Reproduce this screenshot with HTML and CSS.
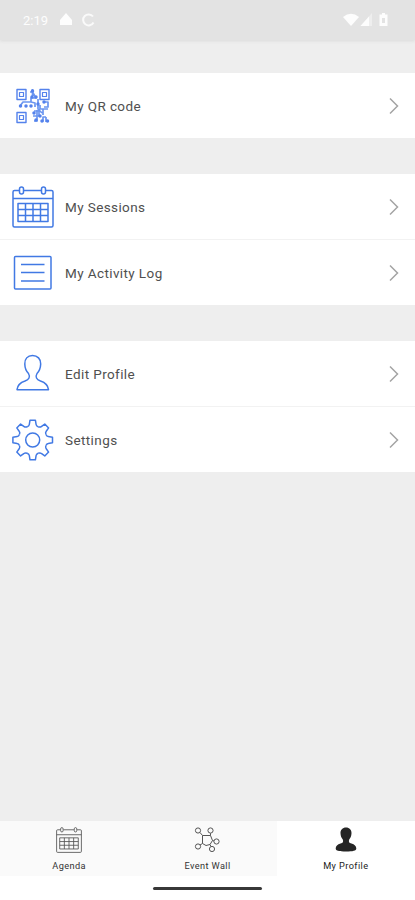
FILE: index.html
```html
<!DOCTYPE html>
<html lang="en">
<head>
<meta charset="utf-8">
<title>My Profile</title>
<link rel="stylesheet" href="styles.css">
</head>
<body>
<svg width="0" height="0" class="defs">
  <symbol id="chevron" viewBox="0 0 12 20"><path d="M2 2.500 9.500 10 2 17.500" /></symbol>
  <symbol id="calendar" viewBox="0 0 42 42">
    <path d="M7 4.500H2.500Q1 4.500 1 6V39.500Q1 41 2.500 41H39.500Q41 41 41 39.500V6Q41 4.500 39.500 4.500H34M12 4.500H29M1 12.500H41"/>
    <rect x="7.500" y="1" width="4" height="7" rx="2"/><rect x="29.500" y="1" width="4" height="7" rx="2"/>
    <path d="M6 17.500H36V35.500H6ZM6 23.500H36M6 29.500H36M13.500 17.500V35.500M21 17.500V35.500M28.500 17.500V35.500"/>
  </symbol>
</svg>
<div class="screen">
  <header class="status">
    <span class="time">2:19</span>
    <svg class="status-left" width="38" height="16" viewBox="0 0 38 16">
      <path class="solid" d="M7 1 13 8V13H1V8Z"/>
      <path class="ring" d="M34 4.500A5.500 5.500 0 1 0 34.500 10.500"/>
    </svg>
    <svg class="status-right" width="46" height="16" viewBox="0 0 46 16">
      <path class="solid" d="M0 5Q8-1.500 16 5L8 14Z"/>
      <path class="faint" d="M17.500 14 29 1V14Z"/><path class="solid" d="M17.500 14 26 4.500V14Z"/>
      <path class="solid" fill-rule="evenodd" d="M37 2.500H39V1H42V2.500H44.500V14H36.500V2.500ZM39 6V11H42V6Z"/>
    </svg>
  </header>
  <main class="menu">
    <section class="group">
      <a class="row">
        <svg class="icon qr" width="42" height="42" viewBox="0 0 42 42">
          <path d="M5 4.500H14V14.500H5ZM28 4.500H37V14.500H28ZM5 27.500H14V37.500H5Z"/>
          <path class="inner" d="M7.500 7.500H11.500V11.500H7.500ZM30.500 7.500H34.500V11.500H30.500ZM7.500 30.500H11.500V34.500H7.500Z"/>
          <path class="bits" d="M20.500 4V11M18 7H20.500L24 13H19V17M8 21 11 17H19L23 18V22M26 14V24L30 28M31 17H36V22H32M28 20V24H31M36 24H31V30M22 26H27V31H21M25 25V34M22 36H25V33M29 36H31V32H34M34 32V37"/>
          <path class="dots" d="M20.500 6V6.010M20 12V12.010M24 12V12.010M8.500 21V21.010M14 21V21.010M19 21V21.010M26 19V19.010M32 17V17.010M22 28V28.010M28 31V31.010M24 35V35.010M30 36V36.010M35.500 36V36.010"/>
        </svg>
        <span class="label">My QR code</span><svg class="chevron"><use href="#chevron"/></svg>
      </a>
    </section>
    <section class="group">
      <a class="row">
        <svg class="icon" width="42" height="42"><use href="#calendar"/></svg>
        <span class="label">My Sessions</span><svg class="chevron"><use href="#chevron"/></svg>
      </a>
      <a class="row">
        <svg class="icon" width="42" height="42" viewBox="0 0 42 42"><rect x="2.500" y="4.500" width="36.500" height="32.500" rx="1"/><path d="M9 12.500H32.500M9 20.500H32.500M9 29H32.500"/></svg>
        <span class="label">My Activity Log</span><svg class="chevron"><use href="#chevron"/></svg>
      </a>
    </section>
    <section class="group">
      <a class="row">
        <svg class="icon" width="42" height="42" viewBox="0 1 42 42"><path d="M20.500 3.500C15.500 3.500 12.500 7 12.800 12C12.900 16.500 14 19 16.500 21.500C18.500 25 17 27.500 13 29C7.500 30.800 5.500 33 5 37.700H36.500C36 33 34 30.800 28.500 29C24.500 27.500 23 25 25 21.500C27.500 19 28.500 16.500 28.700 12C28.900 7 25.500 3.500 20.500 3.500Z"/></svg>
        <span class="label">Edit Profile</span><svg class="chevron"><use href="#chevron"/></svg>
      </a>
      <a class="row">
        <svg class="icon" width="42" height="42" viewBox="-20.700 -21 42 42">
          <g id="tooth"><path d="M-5.510-13.300Q-3.600-14-3.400-15.500L-2.700-19.800H2.700L3.400-15.500Q3.600-14 5.510-13.300"/></g>
          <use href="#tooth" transform="rotate(45)"/><use href="#tooth" transform="rotate(90)"/><use href="#tooth" transform="rotate(135)"/><use href="#tooth" transform="rotate(180)"/><use href="#tooth" transform="rotate(225)"/><use href="#tooth" transform="rotate(270)"/><use href="#tooth" transform="rotate(315)"/>
          <circle r="7"/>
        </svg>
        <span class="label">Settings</span><svg class="chevron"><use href="#chevron"/></svg>
      </a>
    </section>
  </main>
  <nav class="tabs">
    <a class="tab"><svg class="tab-icon" width="26" height="26" viewBox="0 0 42 42"><use href="#calendar"/></svg><span>Agenda</span></a>
    <a class="tab"><svg class="tab-icon net" width="26" height="26" viewBox="0 0 26 26"><path d="M8.500 8.500H16.500L18.500 13.500 16 17.500 12 18.500 8.500 16.500Z"/><circle cx="4" cy="3.500" r="2.600"/><circle cx="16.500" cy="3.500" r="2.600"/><circle cx="22.500" cy="14.500" r="2.600"/><circle cx="4" cy="19.500" r="2.600"/><circle cx="18" cy="22" r="2.600"/><path d="M6 5.500 8.500 8.500M16.500 6.200V8.500M18.500 13.500 20 14M6 18 8.500 16.500M16 17.500 17 19.500"/></svg><span>Event Wall</span></a>
    <a class="tab active"><svg class="tab-icon person" width="26" height="26" viewBox="0 0 26 26"><path d="M13 .5C9.500 .5 7.300 3 7.500 6.200C7.600 9.200 8.600 11 9.800 12.500C10.600 15 10 15.700 7.500 16.500C4.500 17.500 2.700 19 2.700 21.500C2.700 23.700 6 24.500 13 24.500S23.300 23.700 23.300 21.500C23.300 19 21.500 17.500 18.500 16.500C16 15.700 15.400 15 16.200 12.500C17.400 11 18.400 9.200 18.500 6.200C18.700 3 16.500 .5 13 .5Z"/></svg><span>My Profile</span></a>
  </nav>
  <footer class="home"><div class="home-bar"></div></footer>
</div>
</body>
</html>
```
FILE: styles.css
```css
* { box-sizing: border-box; }
body { margin: 0; font-family: Roboto, sans-serif; background: #eee; }
.defs { display: block; height: 0; }
.screen { display: flex; flex-direction: column; height: 900px; width: 415px; background: #eee; }
.status { height: 40px; flex: none; display: flex; align-items: center; padding: 0 26px 0 23px; background: #e3e3e3; box-shadow: 0 1px 3px #dadada; color: #fdfdfd; }
.time { width: 36px; font-size: 13px; letter-spacing: 0; }
.status-right { margin-left: auto; }
.solid { fill: #fdfdfd; }
.faint { fill: #eee; }
.ring { fill: none; stroke: #fafafa; stroke-width: 2; }
.menu { flex: 1; display: flex; flex-direction: column; gap: 36px; padding-top: 33px; }
.group { background: #fff; }
.row { display: flex; align-items: center; height: 65px; padding: 0 15px 0 12px; }
.row + .row { height: 66px; border-top: 1px solid #f2f2f2; }
.icon { flex: none; fill: none; stroke: #4179e4; stroke-width: 1.5; stroke-linejoin: round; }
.qr { stroke: #5482ec; stroke-width: 1.4; }
.inner { stroke-width: 1.2; }
.bits { stroke: #6b96f0; stroke-width: 1.7; }
.dots { stroke-width: 3.5; stroke-linecap: round; }
.label { margin-left: 11px; font-size: 13.5px; letter-spacing: 0.4px; color: #505050; }
.chevron { width: 12px; height: 20px; margin-left: auto; fill: none; stroke: #a4a4a4; stroke-width: 1.5; }
.tabs { flex: none; height: 55px; display: flex; background: #fafafa; }
.tab { flex: 1; display: flex; flex-direction: column; align-items: center; padding-top: 6px; gap: 7px; font-size: 9.2px; line-height: 12px; letter-spacing: 0.4px; color: #333; white-space: nowrap; }
.tab-icon { fill: none; stroke: #555; stroke-width: 1.4; }
.net { stroke-width: 1; }
.active { background: #fff; color: #222; }
.person { fill: #252525; stroke: none; }
.home { flex: none; height: 24px; display: flex; justify-content: center; align-items: center; background: #fff; }
.home-bar { width: 109px; height: 3px; border-radius: 2px; background: #383838; }
```
